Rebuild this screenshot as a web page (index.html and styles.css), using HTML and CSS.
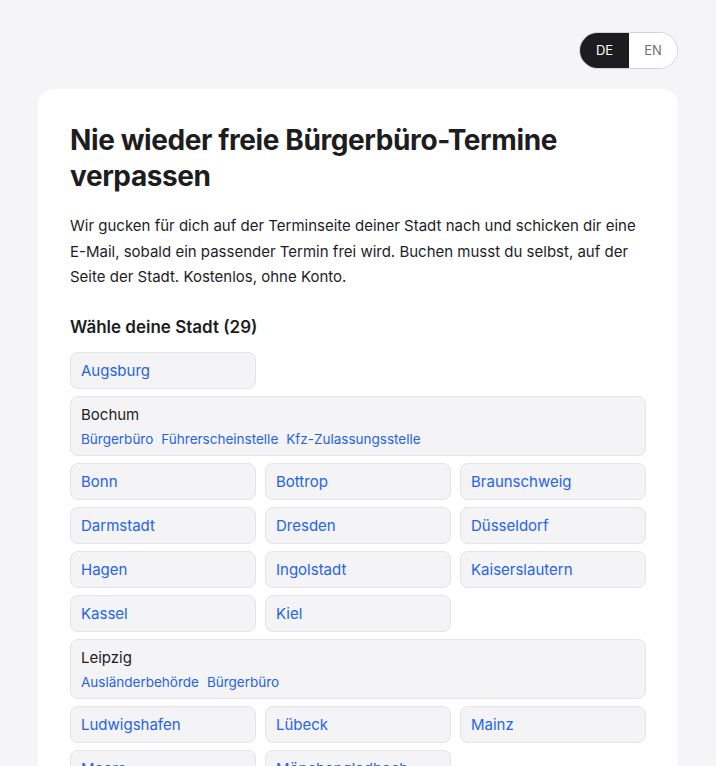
FILE: index.html
```html
<!DOCTYPE html>
<html lang="de">
<head>
<meta charset="utf-8">
<title>Bürgerbüro-Termine</title>
<link rel="stylesheet" href="styles.css">
</head>
<body>
<div class="page">
  <div class="topbar">
    <div class="lang">
      <button class="lang-btn active">DE</button>
      <button class="lang-btn">EN</button>
    </div>
  </div>
  <main class="card">
    <h1>Nie wieder freie Bürgerbüro-Termine verpassen</h1>
    <p class="intro">Wir gucken für dich auf der Terminseite deiner Stadt nach und schicken dir eine E-Mail, sobald ein passender Termin frei wird. Buchen musst du selbst, auf der Seite der Stadt. Kostenlos, ohne Konto.</p>
    <h2>Wähle deine Stadt (29)</h2>
    <div class="cities">
      <a class="city" href="#">Augsburg</a>
      <div class="city multi">
        <div class="city-name">Bochum</div>
        <div class="services"><a href="#">Bürgerbüro</a><a href="#">Führerscheinstelle</a><a href="#">Kfz-Zulassungsstelle</a></div>
      </div>
      <a class="city" href="#">Bonn</a>
      <a class="city" href="#">Bottrop</a>
      <a class="city" href="#">Braunschweig</a>
      <a class="city" href="#">Darmstadt</a>
      <a class="city" href="#">Dresden</a>
      <a class="city" href="#">Düsseldorf</a>
      <a class="city" href="#">Hagen</a>
      <a class="city" href="#">Ingolstadt</a>
      <a class="city" href="#">Kaiserslautern</a>
      <a class="city" href="#">Kassel</a>
      <a class="city" href="#">Kiel</a>
      <div class="city multi">
        <div class="city-name">Leipzig</div>
        <div class="services"><a href="#">Ausländerbehörde</a><a href="#">Bürgerbüro</a></div>
      </div>
      <a class="city" href="#">Ludwigshafen</a>
      <a class="city" href="#">Lübeck</a>
      <a class="city" href="#">Mainz</a>
      <a class="city" href="#">Moers</a>
      <a class="city" href="#">Mönchengladbach</a>
    </div>
  </main>
</div>
</body>
</html>
```
FILE: styles.css
```css
* { box-sizing: border-box; }
html, body { margin: 0; padding: 0; }
body {
  background: #f5f5f7;
  font-family: Inter, "Liberation Sans", sans-serif;
  color: #1d1d1f;
}
.page {
  max-width: 640px;
  margin: 0 auto;
  padding-top: 32px;
}
.topbar {
  display: flex;
  justify-content: flex-end;
  margin-bottom: 20px;
}
.lang {
  display: flex;
  border: 1px solid #d2d2d7;
  border-radius: 19px;
  overflow: hidden;
  background: #fff;
}
.lang-btn {
  font-family: inherit;
  font-size: 13px;
  line-height: 15px;
  padding: 10px 14px;
  border: 0;
  background: #fff;
  color: #6e6e73;
  width: 48px;
}
.lang-btn.active {
  background: #1d1d1f;
  color: #fff;
  width: 49px;
}
.card {
  background: #fff;
  border-radius: 16px;
  padding: 33px 32px 32px;
}
h1 {
  margin: 0 0 19px;
  font-size: 28px;
  line-height: 36px;
  font-weight: 700;
  letter-spacing: -0.4px;
}
.intro {
  margin: 0 0 26px;
  font-size: 15px;
  line-height: 25.5px;
  color: #1d1d1f;
}
h2 {
  margin: 0 0 14px;
  font-size: 17px;
  line-height: 22px;
  font-weight: 600;
}
.cities {
  display: grid;
  grid-template-columns: repeat(3, 1fr);
  gap: 7px 9px;
}
.city {
  display: block;
  background: #f4f4f6;
  border: 1px solid #e3e3e8;
  border-radius: 8px;
  padding: 8px 10px;
  font-size: 15px;
  line-height: 19px;
  color: #2563eb;
  text-decoration: none;
}
.city.multi {
  grid-column: 1 / -1;
}
.city-name {
  color: #1d1d1f;
}
.services {
  display: flex;
  gap: 8px;
  margin-top: 7px;
  font-size: 13.5px;
  line-height: 16px;
}
.services a {
  color: #2563eb;
  text-decoration: none;
}
```
